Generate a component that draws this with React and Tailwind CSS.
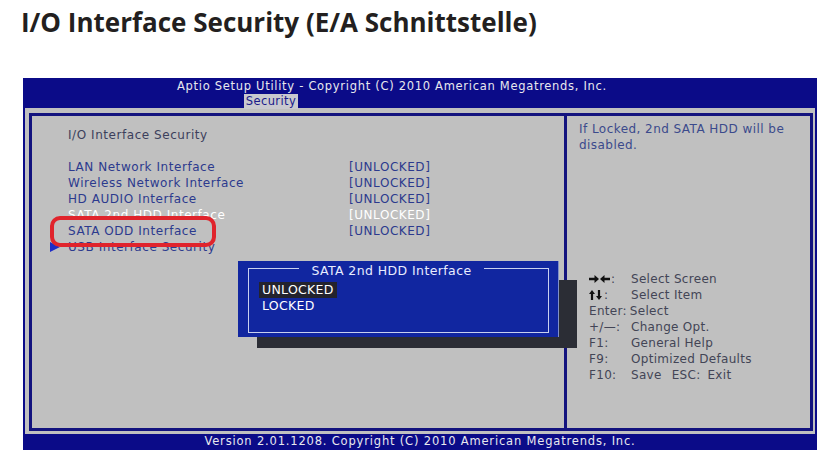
// App.jsx – Aptio BIOS "I/O Interface Security" screen
const rows = [
  { label: 'LAN Network Interface', value: '[UNLOCKED]' },
  { label: 'Wireless Network Interface', value: '[UNLOCKED]' },
  { label: 'HD AUDIO Interface', value: '[UNLOCKED]' },
  { label: 'SATA 2nd HDD Interface', value: '[UNLOCKED]', active: true },
  { label: 'SATA ODD Interface', value: '[UNLOCKED]' },
];

const ArrowRight = () => (
  <svg width="10" height="8" viewBox="0 0 10 8" className="fill-[#111]">
    <path d="M0 2.8h5.5V0L10 4 5.5 8V5.2H0z" />
  </svg>
);
const ArrowLeft = () => (
  <svg width="10" height="8" viewBox="0 0 10 8" className="fill-[#111]">
    <path d="M10 2.8H4.5V0L0 4l4.5 4V5.2H10z" />
  </svg>
);
const ArrowUp = () => (
  <svg width="6" height="10" viewBox="0 0 6 10" className="fill-[#111]">
    <path d="M3 0l3 4H4.1v6H1.9V4H0z" />
  </svg>
);
const ArrowDown = () => (
  <svg width="6" height="10" viewBox="0 0 6 10" className="fill-[#111]">
    <path d="M3 10l3-4H4.1V0H1.9v6H0z" />
  </svg>
);

const keys = [
  { k: 'Enter:', d: 'Select', tight: true },
  { k: '+/—:', d: 'Change Opt.' },
  { k: 'F1:', d: 'General Help' },
  { k: 'F9:', d: 'Optimized Defaults' },
];

export default function App() {
  return (
    <div className="relative w-[828px] h-[459px] bg-white overflow-hidden font-['DejaVu_Sans',sans-serif]">
      {/* page heading */}
      <h1 className="pl-[21px] pt-[5px] h-[78px] text-[26px] leading-[34px] font-bold text-[#231f20] font-['Open_Sans',sans-serif]">
        I/O Interface Security (E/A Schnittstelle)
      </h1>

      {/* BIOS frame */}
      <div className="ml-[23px] w-[794px] bg-[#0b0b88]">
        <div className="h-[30px] flex flex-col items-center pr-[56px] text-[11.5px] tracking-[0.7px] text-[#e8e8ee] leading-[15px]">
          <div className="pt-[1px]">Aptio Setup Utility - Copyright (C) 2010 American Megatrends, Inc.</div>
          <div className="mr-[242px] bg-[#c9c9cf] text-[#1a1a8a] px-[2px] tracking-[0.4px]">Security</div>
        </div>

        <div className="mx-[2px] bg-[#c0c0c0] pl-[4px] pr-[2px] pt-[5px] pb-[3px]">
          <div className="h-[318px] border-[3px] border-[#13137e] flex">
            {/* left panel */}
            <div className="w-[532px] pl-[36px] pt-[11px] text-[12px] leading-[16px] tracking-[0.55px] text-[#2c3a8e]">
              <div className="text-[#3c3f5c]">I/O Interface Security</div>
              <div className="h-[16px]" />
              {rows.map((r) => (
                <div key={r.label} className={`grid grid-cols-[281px_1fr] ${r.active ? 'text-white' : ''}`}>
                  <span>{r.label}</span>
                  <span>{r.value}</span>
                </div>
              ))}
              <div className="relative">
                <span className="absolute left-[-18px] top-[3px] w-0 h-0 border-y-[5px] border-y-transparent border-l-[10px] border-l-[#1e2cc8]" />
                USB Interface Security
              </div>
            </div>

            {/* right panel */}
            <div className="flex-1 border-l-[3px] border-[#13137e] pt-[5px] text-[12px] leading-[16px] tracking-[0.45px]">
              <div className="pl-[12px] text-[#3b4a8c]">
                If Locked, 2nd SATA HDD will be
                <br />
                disabled.
              </div>
              <div className="pl-[22px] mt-[118px] text-[#434556] tracking-[0.3px]">
                <div className="flex items-center">
                  <span className="w-[42px] flex items-center gap-[1px]">
                    <ArrowRight />
                    <ArrowLeft />
                    <span>:</span>
                  </span>
                  <span>Select Screen</span>
                </div>
                <div className="flex items-center">
                  <span className="w-[42px] flex items-center gap-[1px]">
                    <ArrowUp />
                    <ArrowDown />
                    <span className="ml-[1px]">:</span>
                  </span>
                  <span>Select Item</span>
                </div>
                {keys.map((x) => (
                  <div key={x.k} className="flex">
                    <span className={x.tight ? 'mr-[3px]' : 'w-[42px]'}>{x.k}</span>
                    <span>{x.d}</span>
                  </div>
                ))}
                <div className="flex">
                  <span className="w-[42px]">F10:</span>
                  <span className="mr-[10px]">Save</span>
                  <span className="mr-[7px]">ESC:</span>
                  <span>Exit</span>
                </div>
              </div>
            </div>
          </div>
        </div>

        <div className="h-[16px] flex items-center justify-center text-[11.5px] tracking-[0.82px] text-[#e8e8ee]">
          Version 2.01.1208. Copyright (C) 2010 American Megatrends, Inc.
        </div>
      </div>

      {/* popup shadow + popup */}
      <div className="absolute left-[257px] top-[280px] w-[320px] h-[68px] bg-[#2b2d35]" />
      <div className="absolute left-[238px] top-[261px] w-[321px] h-[76px] bg-[#1126a0] border-r border-[#8090c8] p-[7px_9px_4px_10px]">
        <div className="relative h-full border border-[#c8d0f0]">
          <div className="absolute left-0 right-[14px] top-[-6px] flex justify-center">
            <span className="bg-[#1126a0] px-[12px] text-[12.5px] leading-[16px] tracking-[0.4px] text-[#e8ecff]">SATA 2nd HDD Interface</span>
          </div>
          <div className="pt-[13px] pl-[13px] text-[12.5px] leading-[16px] tracking-[0.3px] text-white">
            <div className="inline-block bg-[#23232e] px-[3px] ml-[-3px]">UNLOCKED</div>
            <div>LOCKED</div>
          </div>
        </div>
      </div>

      {/* red highlight ring */}
      <div className="absolute left-[50px] top-[216px] w-[166px] h-[31px] border-[4px] border-[#e0242c] rounded-[10px]" />
    </div>
  );
}
